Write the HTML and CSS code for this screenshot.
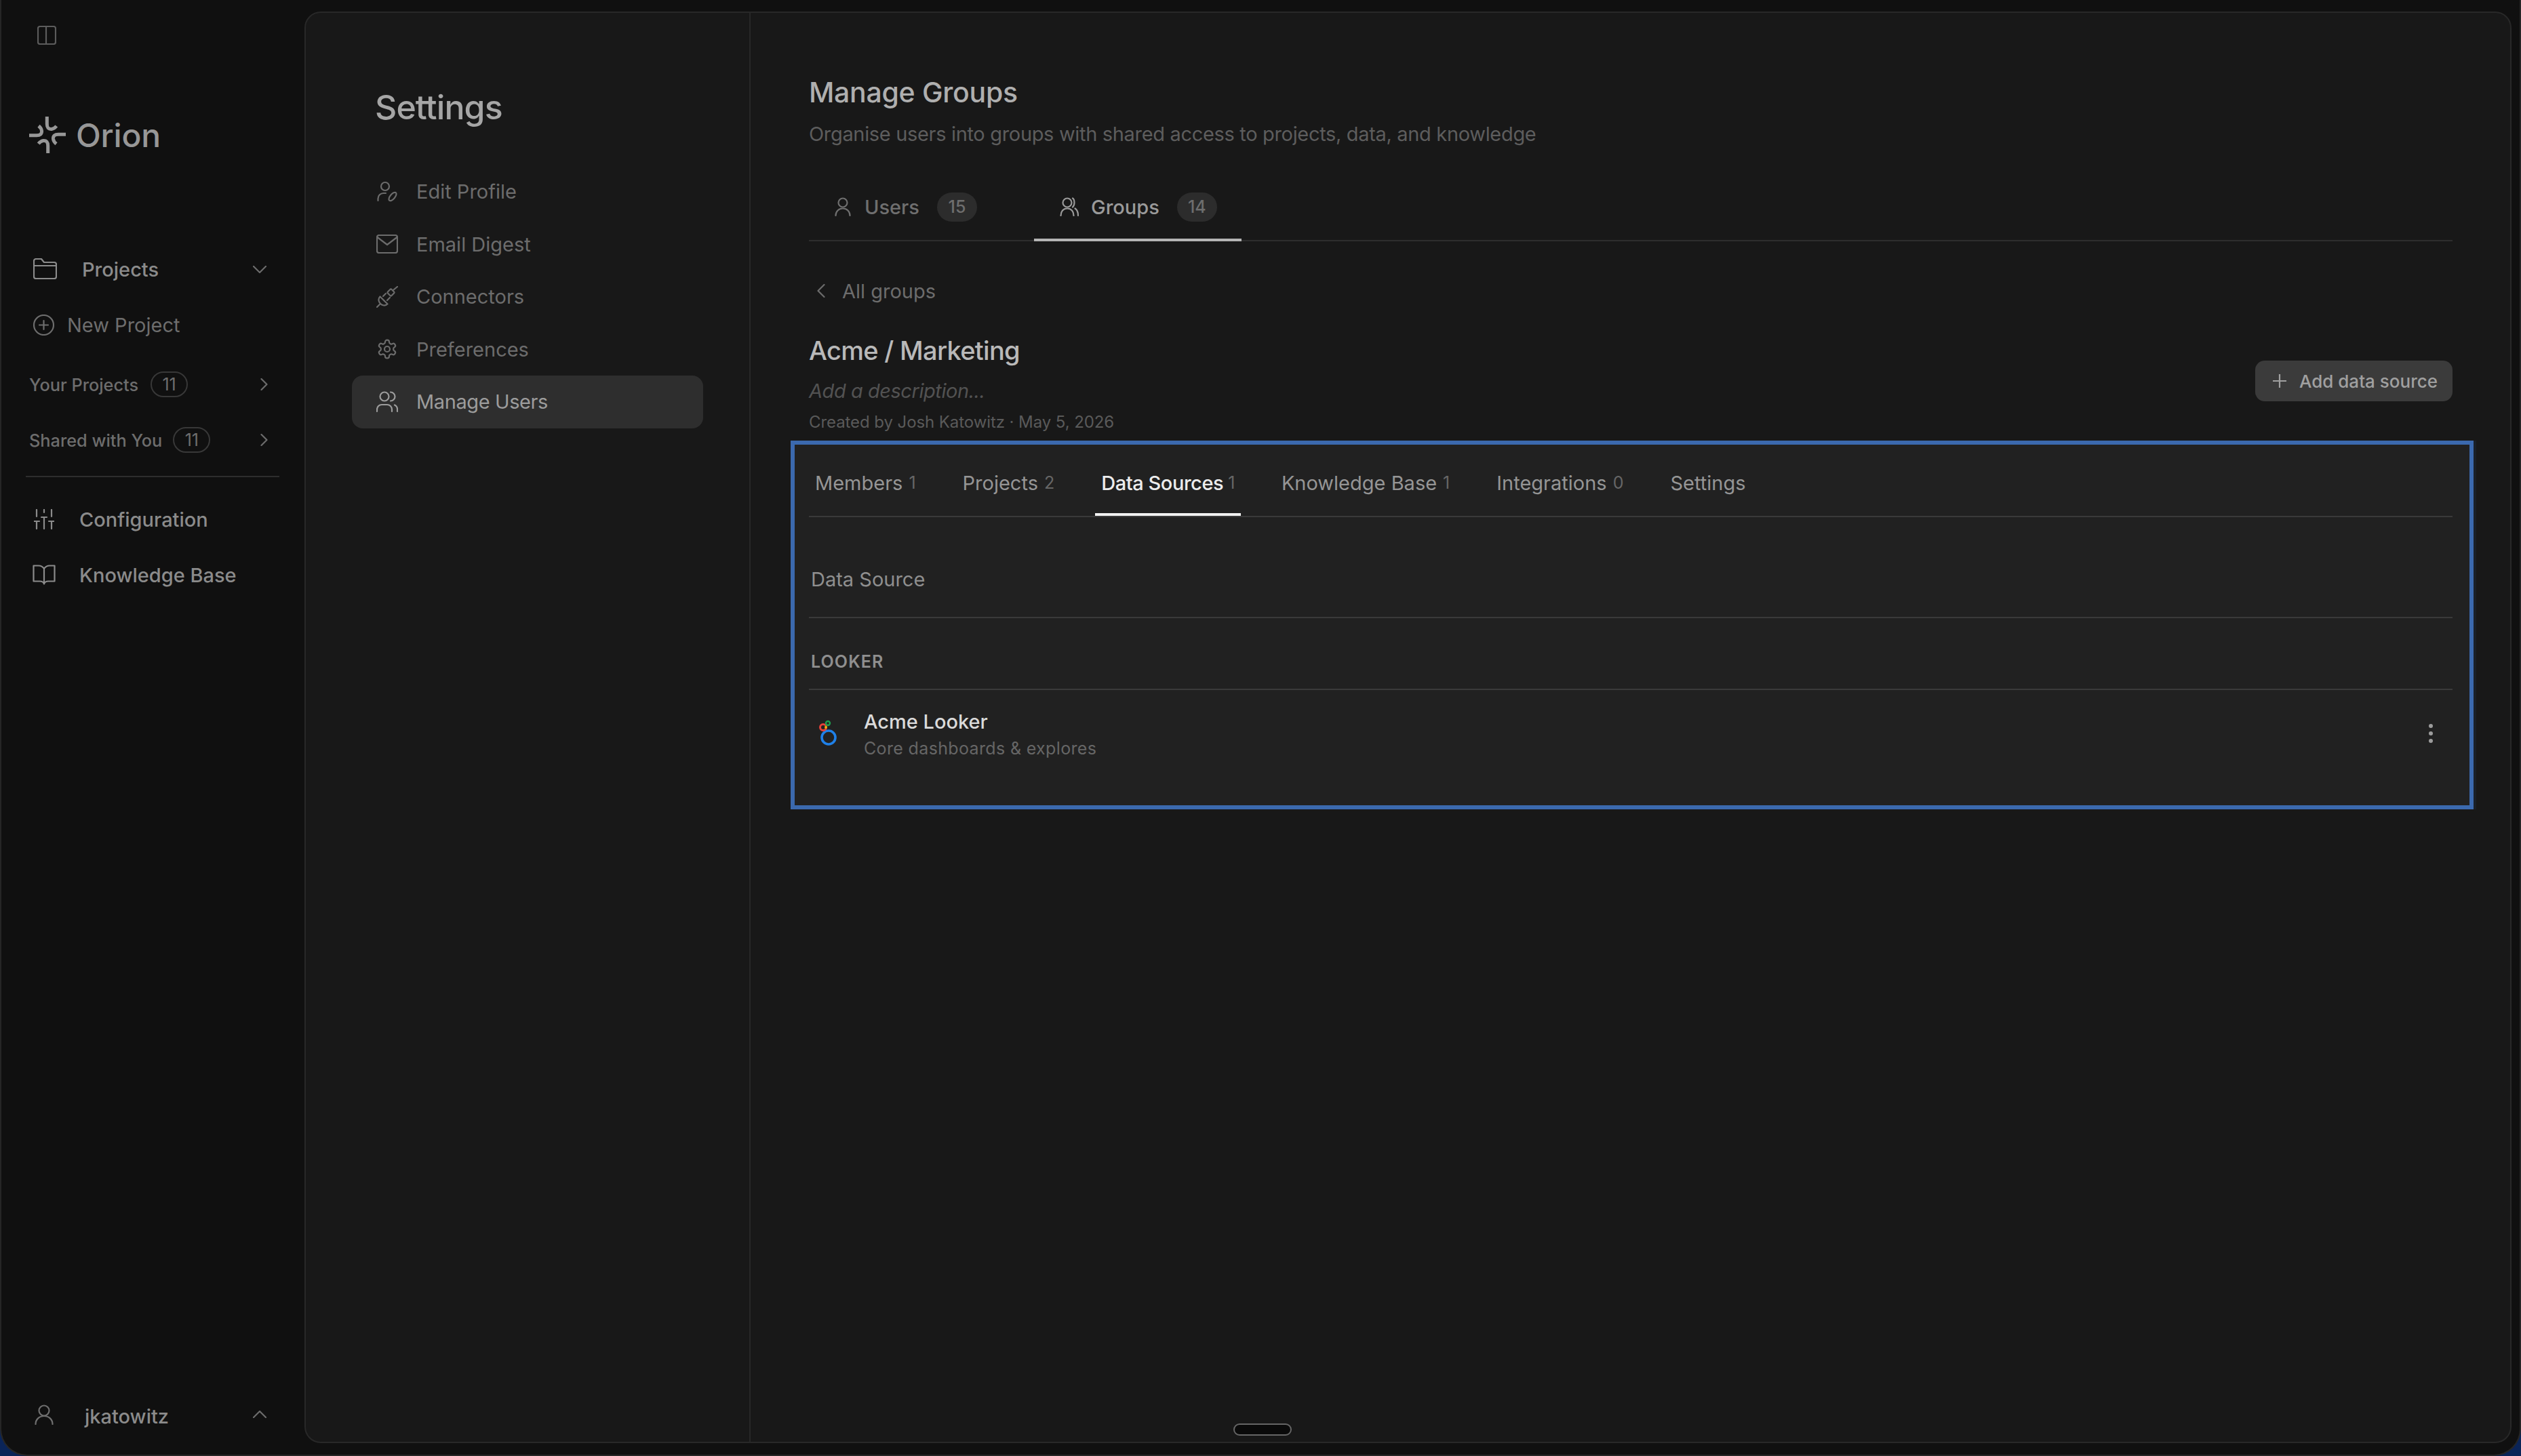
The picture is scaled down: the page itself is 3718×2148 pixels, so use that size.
FILE: index.html
```html
<!DOCTYPE html>
<html lang="en">
<head>
    <meta charset="UTF-8">
    <meta name="viewport" content="width=device-width, initial-scale=1.0">
    <title>Orion - Manage Groups</title>
    <link rel="stylesheet" href="styles.css">
</head>
<body>
    <div class="app">
        <!-- Left sidebar -->
        <aside class="sidebar">
            <svg class="toggle-icon" width="28" height="28" viewBox="0 0 28 28"><rect x="1" y="1" width="26" height="26" rx="3"/><path d="M13 1V27"/></svg>

            <div class="brand">
                <svg class="brand-icon" width="54" height="54" viewBox="0 0 54 54">
                    <path d="M26.3 0V11Q26.3 19 33 18.5Q37 18 40.3 14"/>
                    <path d="M26.3 0V11Q26.3 19 33 18.5Q37 18 40.3 14" transform="rotate(90 27 27)"/>
                    <path d="M26.3 0V11Q26.3 19 33 18.5Q37 18 40.3 14" transform="rotate(180 27 27)"/>
                    <path d="M26.3 0V11Q26.3 19 33 18.5Q37 18 40.3 14" transform="rotate(270 27 27)"/>
                </svg>
                <span>Orion</span>
            </div>

            <div class="side-row side-main">
                <svg class="folder-icon" width="35" height="31" viewBox="0 0 35 31"><path d="M1 11V4A3 3 0 0 1 4 1H12L16 6H31A3 3 0 0 1 34 9V27A3 3 0 0 1 31 30H4A3 3 0 0 1 1 27ZM1 11H34"/></svg>
                <span>Projects</span>
                <svg class="chevron chevron-end" width="20" height="11" viewBox="0 0 20 11"><path d="M1 1L10 10L19 1"/></svg>
            </div>
            <div class="side-row side-new">
                <svg width="31" height="31" viewBox="0 0 31 31"><circle cx="15.5" cy="15.5" r="14.5"/><path d="M15.5 9V22M9 15.5H22"/></svg>
                <span>New Project</span>
            </div>
            <div class="side-row side-group first-group">
                <span>Your Projects</span>
                <span class="pill">11</span>
                <svg class="chevron chevron-end" width="11" height="18" viewBox="0 0 11 18"><path d="M1.5 1L9.5 9L1.5 17"/></svg>
            </div>
            <div class="side-row side-group">
                <span>Shared with You</span>
                <span class="pill">11</span>
                <svg class="chevron chevron-end" width="11" height="18" viewBox="0 0 11 18"><path d="M1.5 1L9.5 9L1.5 17"/></svg>
            </div>
            <div class="side-divider"></div>
            <div class="side-row side-main side-tool">
                <svg class="sliders-icon" width="30" height="30" viewBox="0 0 30 30"><path d="M4 1V11M4 19V29M0 18H8M15 1V5M15 13V29M11 12H19M26 1V11M26 19V29M22 18H30"/></svg>
                <span>Configuration</span>
            </div>
            <div class="side-row side-main side-book">
                <svg width="34" height="30" viewBox="0 0 34 30"><path d="M17 6C15 3 12 1.5 9 1.5H1.5V24.5H11C14 24.5 16 25.5 17 28.5C18 25.5 20 24.5 23 24.5H32.5V1.5H25C22 1.5 19 3 17 6ZM17 6V28"/></svg>
                <span>Knowledge Base</span>
            </div>

            <div class="side-row side-user">
                <svg width="28" height="30" viewBox="0 0 28 30"><circle cx="14" cy="9" r="7.5"/><path d="M1.5 29C1.5 22 7 17 14 17S26.5 22 26.5 29"/></svg>
                <span>jkatowitz</span>
                <svg class="chevron chevron-end" width="20" height="11" viewBox="0 0 20 11"><path d="M1 10L10 1L19 10"/></svg>
            </div>
        </aside>

        <div class="panel">
            <!-- Settings nav -->
            <nav class="settings">
                <h1 class="settings-title">Settings</h1>
                <a class="settings-item">
                    <svg width="32" height="32" viewBox="0 0 32 32"><circle cx="13" cy="8" r="6"/><path d="M2.5 29V26A8 8 0 0 1 10.5 18H14"/><ellipse cx="24" cy="23" rx="3.5" ry="7.5" transform="rotate(40 24 23)"/></svg>
                    <span>Edit Profile</span>
                </a>
                <a class="settings-item">
                    <svg width="32" height="28" viewBox="0 0 32 28"><rect x="1" y="1" width="30" height="26" rx="3"/><path d="M1.5 4L16 15L30.5 4"/></svg>
                    <span>Email Digest</span>
                </a>
                <a class="settings-item">
                    <svg width="32" height="32" viewBox="0 0 32 32"><rect x="17.5" y="5.5" width="8" height="8" rx="1.5" transform="rotate(45 21.5 9.5)"/><path d="M25.5 5.5L31 1M5.5 15.5L16.5 26.5C13 30 8.5 28.5 6 26S2 19 5.5 15.5ZM1 31L5 27M10 15L14 11M16 21L20 17"/></svg>
                    <span>Connectors</span>
                </a>
                <a class="settings-item">
                    <svg width="32" height="32" viewBox="0 0 24 24"><path class="thin" d="M12.22 2h-.44a2 2 0 0 0-2 2v.18a2 2 0 0 1-1 1.73l-.43.25a2 2 0 0 1-2 0l-.15-.08a2 2 0 0 0-2.73.73l-.22.38a2 2 0 0 0 .73 2.73l.15.1a2 2 0 0 1 1 1.72v.51a2 2 0 0 1-1 1.74l-.15.09a2 2 0 0 0-.73 2.73l.22.38a2 2 0 0 0 2.73.73l.15-.08a2 2 0 0 1 2 0l.43.25a2 2 0 0 1 1 1.73V20a2 2 0 0 0 2 2h.44a2 2 0 0 0 2-2v-.18a2 2 0 0 1 1-1.73l.43-.25a2 2 0 0 1 2 0l.15.08a2 2 0 0 0 2.73-.73l.22-.39a2 2 0 0 0-.73-2.73l-.15-.08a2 2 0 0 1-1-1.74v-.5a2 2 0 0 1 1-1.74l.15-.09a2 2 0 0 0 .73-2.73l-.22-.38a2 2 0 0 0-2.73-.73l-.15.08a2 2 0 0 1-2 0l-.43-.25a2 2 0 0 1-1-1.73V4a2 2 0 0 0-2-2z"/><circle class="thin" cx="12" cy="12" r="3"/></svg>
                    <span>Preferences</span>
                </a>
                <a class="settings-item active">
                    <svg width="32" height="32" viewBox="0 0 32 32"><circle cx="12" cy="8" r="6.5"/><path d="M1 30V27A7 7 0 0 1 8 20H16A7 7 0 0 1 23 27V30M21 1.5A6.5 6.5 0 0 1 21 14.5M31 30V27A7 7 0 0 0 27 20.5"/></svg>
                    <span>Manage Users</span>
                </a>
            </nav>

            <!-- Main content -->
            <main class="content">
                <h2 class="page-title">Manage Groups</h2>
                <p class="page-sub">Organise users into groups with shared access to projects, data, and knowledge</p>

                <div class="top-tabs">
                    <div class="top-tab">
                        <svg width="24" height="28" viewBox="0 0 24 28"><circle cx="12" cy="8" r="6.5"/><path d="M1.5 27C1.5 21 6 16.5 12 16.5S22.5 21 22.5 27"/></svg>
                        <span class="top-tab-label">Users</span>
                        <span class="count-badge">15</span>
                    </div>
                    <div class="top-tab selected">
                        <svg width="28" height="28" viewBox="0 0 28 28"><circle cx="11" cy="8" r="6.5"/><path d="M1.5 27C1.5 21 5 16.5 11 16.5S20.5 21 20.5 27M19 1.5C22 3 22.5 12 19 14.5M27 27C27 22 25.5 18.5 22.5 16.5"/></svg>
                        <span class="top-tab-label">Groups</span>
                        <span class="count-badge">14</span>
                    </div>
                </div>

                <div class="back-link">
                    <svg class="chevron" width="12" height="20" viewBox="0 0 12 20"><path d="M10.5 1L1.5 10L10.5 19"/></svg>
                    <span>All groups</span>
                </div>

                <div class="group-head">
                    <div>
                        <h3 class="group-name">Acme / Marketing</h3>
                        <p class="group-desc">Add a description...</p>
                        <p class="group-meta">Created by Josh Katowitz · May 5, 2026</p>
                    </div>
                    <button class="add-btn">
                        <svg width="20" height="20" viewBox="0 0 20 20"><path d="M10 0V20M0 10H20"/></svg>
                        Add data source
                    </button>
                </div>

                <!-- Highlighted region -->
                <section class="focus-box">
                    <div class="sub-tabs">
                        <div class="sub-tab">Members<span class="sub-count">1</span></div>
                        <div class="sub-tab">Projects<span class="sub-count">2</span></div>
                        <div class="sub-tab selected">Data Sources<span class="sub-count">1</span></div>
                        <div class="sub-tab">Knowledge Base<span class="sub-count">1</span></div>
                        <div class="sub-tab">Integrations<span class="sub-count">0</span></div>
                        <div class="sub-tab">Settings</div>
                    </div>
                    <div class="table-head">Data Source</div>
                    <div class="table-group">LOOKER</div>
                    <div class="source-row">
                        <svg class="looker-logo" width="36" height="44" viewBox="0 0 36 44">
                            <path d="M13.5 14L15.5 17" stroke="#9aa7b5" stroke-width="2"/>
                            <circle cx="18" cy="26" r="10" stroke="#1f80e8" stroke-width="3.6"/>
                            <circle cx="10" cy="11" r="4.5" stroke="#e5413a" stroke-width="3"/>
                            <circle cx="17" cy="5" r="3" stroke="#1f9d4d" stroke-width="2.4"/>
                            <circle cx="14" cy="11" r="1.9" fill="#f2b705" stroke="none"/>
                        </svg>
                        <div class="source-text">
                            <div class="source-name">Acme Looker</div>
                            <div class="source-sub">Core dashboards &amp; explores</div>
                        </div>
                        <svg class="kebab" width="12" height="34" viewBox="0 0 12 34"><circle cx="6" cy="6" r="3"/><circle cx="6" cy="17" r="3"/><circle cx="6" cy="28" r="3"/></svg>
                    </div>
                </section>
            </main>

            <div class="resize-handle"></div>
        </div>
    </div>
</body>
</html>
```

FILE: styles.css
```css
* {
    margin: 0;
    padding: 0;
    box-sizing: border-box;
}

html, body {
    width: 100%;
    height: 100%;
    overflow: hidden;
}

body {
    background-color: #0a2458;
    font-family: "Inter", "Liberation Sans", sans-serif;
}

svg {
    flex-shrink: 0;
    fill: none;
    stroke: currentColor;
    stroke-width: 2.2;
    stroke-linecap: round;
    stroke-linejoin: round;
}

svg .thin {
    stroke-width: 1.65;
}

.app {
    position: relative;
    display: flex;
    width: 100%;
    height: 100%;
    background-color: #101010;
    border-left: 2px solid #262626;
    border-right: 2px solid #262626;
    border-bottom: 2px solid #262626;
    border-radius: 0 0 40px 40px;
    overflow: hidden;
}

/* Sidebar */
.sidebar {
    width: 447px;
    flex-shrink: 0;
    display: flex;
    flex-direction: column;
    padding-top: 38px;
}

.toggle-icon {
    margin-left: 53px;
    color: #5c5c5c;
}

.brand {
    display: flex;
    align-items: center;
    gap: 15px;
    margin: 106px 0 0 41px;
    height: 54px;
    color: #979797;
    font-size: 48px;
    font-weight: 500;
    letter-spacing: -0.2px;
}

.brand-icon {
    stroke-width: 5;
    stroke-linecap: butt;
}

.side-row {
    display: flex;
    align-items: center;
    height: 82px;
    padding-right: 56px;
    position: relative;
}

.chevron-end {
    margin-left: auto;
}

.side-main {
    color: #8b8b8b;
    font-size: 29px;
    font-weight: 500;
    padding-left: 47px;
    gap: 37px;
}

.brand + .side-main {
    margin-top: 130px;
}

.side-tool {
    padding-left: 48px;
}

.side-book {
    padding-left: 46px;
    gap: 35px;
}

.folder-icon {
    margin-top: -2px;
}

.side-new {
    color: #6d6d6d;
    font-size: 29px;
    padding-left: 47px;
    gap: 19px;
}

.side-group {
    color: #6d6d6d;
    font-size: 25.3px;
    font-weight: 500;
    padding-left: 41px;
    gap: 16px;
}

.first-group {
    margin-top: 6px;
}

.side-group .chevron-end {
    margin-right: -2px;
}

.pill {
    display: flex;
    align-items: center;
    justify-content: center;
    width: 55px;
    height: 38px;
    border: 2px solid #383838;
    border-radius: 19px;
    font-size: 25px;
    font-weight: 400;
}

.first-group .pill {
    margin-left: 2px;
}

.side-divider {
    height: 2px;
    margin: 12px 37px 21px 36px;
    background-color: #2d2d2d;
}

.side-user {
    margin-top: auto;
    margin-bottom: 27px;
    height: 60px;
    padding-left: 49px;
    gap: 46px;
    color: #8b8b8b;
    font-size: 29px;
    font-weight: 500;
}

.side-user svg:first-child {
    color: #6f6f6f;
    margin-top: -5px;
}

.side-user .chevron {
    color: #6f6f6f;
    margin-top: -6px;
}

.side-row svg.chevron {
    color: #6c6c6c;
}

/* Panel */
.panel {
    position: relative;
    flex: 1;
    display: flex;
    margin: 17px 12px 17px 0;
    background-color: #181818;
    border: 2px solid #282828;
    border-radius: 24px;
}

.settings {
    width: 656px;
    flex-shrink: 0;
    padding-top: 109px;
    border-right: 2px solid #272727;
}

.settings-title {
    height: 60px;
    margin: 0 0 56px 102px;
    color: #a6a6a6;
    font-size: 50px;
    font-weight: 500;
    line-height: 60px;
    letter-spacing: -0.9px;
}

.settings-item {
    display: flex;
    align-items: center;
    gap: 27px;
    height: 77.5px;
    margin: 0 68px 0 68px;
    padding-left: 36px;
    border-radius: 16px;
    color: #6c6c6c;
    font-size: 29px;
}

.settings-item.active {
    background-color: #2e2e2e;
    color: #9c9c9c;
    letter-spacing: -0.4px;
}

.content {
    flex: 1;
    min-width: 0;
    padding: 92px 85px 0 86px;
}

.page-title {
    height: 50px;
    color: #afafaf;
    font-size: 41px;
    font-weight: 500;
    line-height: 50px;
    letter-spacing: -0.3px;
}

.page-sub {
    height: 40px;
    margin-top: 17px;
    color: #5d5d5d;
    font-size: 29px;
    line-height: 40px;
    letter-spacing: -0.33px;
}

/* Users / Groups tabs */
.top-tabs {
    display: flex;
    gap: 50px;
    height: 98px;
    margin-top: 40px;
    border-bottom: 2px solid #2d2d2d;
}

.top-tab {
    display: flex;
    align-items: center;
    height: 94px;
    padding: 0 34px 0 38px;
    color: #6f6f6f;
    font-size: 29px;
    font-weight: 500;
}

.top-tab.selected {
    padding: 0 36px 0 38px;
    border-bottom: 4px solid #b4b4b4;
    height: 98px;
    color: #9a9a9a;
}

.top-tab-label {
    margin: 0 26px 0 20px;
}

.top-tab.selected .top-tab-label {
    margin-left: 18px;
}

.count-badge {
    display: flex;
    align-items: center;
    justify-content: center;
    width: 59px;
    height: 43px;
    border-radius: 22px;
    background-color: #2c2c2c;
    color: #6e6e6e;
    font-size: 25px;
}

.back-link {
    display: flex;
    align-items: center;
    gap: 25px;
    height: 40px;
    margin-top: 53px;
    padding-left: 12px;
    color: #6c6c6c;
    font-size: 29px;
}

.group-head {
    display: flex;
    justify-content: space-between;
    margin-top: 43px;
}

.group-name {
    height: 50px;
    color: #b9b9b9;
    font-size: 38px;
    font-weight: 500;
    line-height: 50px;
    letter-spacing: -0.7px;
}

.group-desc {
    height: 36px;
    margin-top: 17px;
    color: #525252;
    font-size: 29px;
    font-style: italic;
    line-height: 36px;
    letter-spacing: -0.45px;
}

.group-meta {
    height: 30px;
    margin-top: 13px;
    color: #5a5a5a;
    font-size: 24px;
    line-height: 30px;
    letter-spacing: -0.08px;
}

.add-btn {
    display: flex;
    align-items: center;
    gap: 19px;
    height: 60px;
    margin-top: 40px;
    padding: 0 22px 0 26px;
    border: none;
    border-radius: 14px;
    background-color: #3b3b3b;
    color: #a0a0a0;
    font-family: inherit;
    font-size: 26px;
    font-weight: 500;
}

/* Highlighted box */
.focus-box {
    height: 544px;
    margin: 12px -31px 0 -27px;
    padding: 0 25px 0 21px;
    border: 6px solid #3b69ae;
    background-color: #212121;
    box-shadow: 4px 0 0 #1a2028;
}

.sub-tabs {
    display: flex;
    gap: 51px;
    height: 107px;
    border-bottom: 2px solid #3a3a3a;
}

.sub-tab {
    display: flex;
    align-items: center;
    height: 105px;
    padding: 11px 9px 0 9px;
    border-bottom: 4px solid transparent;
    color: #959595;
    font-size: 29px;
}

.sub-tab.selected {
    border-bottom-color: #f2f2f2;
    color: #ececec;
    font-weight: 500;
    letter-spacing: -0.45px;
}

.sub-count {
    margin-left: 9px;
    color: #666;
    font-size: 25px;
    font-weight: 400;
}

.sub-tab.selected .sub-count {
    margin-left: 7px;
}

.table-head {
    display: flex;
    align-items: center;
    height: 149px;
    padding: 36px 0 0 3px;
    border-bottom: 2px solid #3a3a3a;
    color: #8f8f8f;
    font-size: 29px;
}

.table-group {
    display: flex;
    align-items: center;
    height: 106px;
    padding: 23px 0 0 3px;
    border-bottom: 2px solid #3a3a3a;
    color: #8f8f8f;
    font-size: 25px;
    font-weight: 600;
    letter-spacing: 1.1px;
}

.source-row {
    display: flex;
    align-items: center;
    padding: 27px 26px 0 11px;
}

.looker-logo {
    margin-right: 34px;
}

.source-name {
    height: 40px;
    color: #dadada;
    font-size: 29px;
    font-weight: 500;
    line-height: 40px;
}

.source-sub {
    height: 36px;
    margin-top: 1px;
    color: #666;
    font-size: 25px;
    line-height: 36px;
    letter-spacing: 0.35px;
}

.kebab {
    margin-left: auto;
    margin-top: -4px;
    fill: #9c9c9c;
    stroke: none;
}

.resize-handle {
    position: absolute;
    left: 1368px;
    bottom: 9px;
    width: 86px;
    height: 18px;
    border: 2px solid #666;
    border-radius: 9px;
    background-color: #0a0a0a;
}
```
